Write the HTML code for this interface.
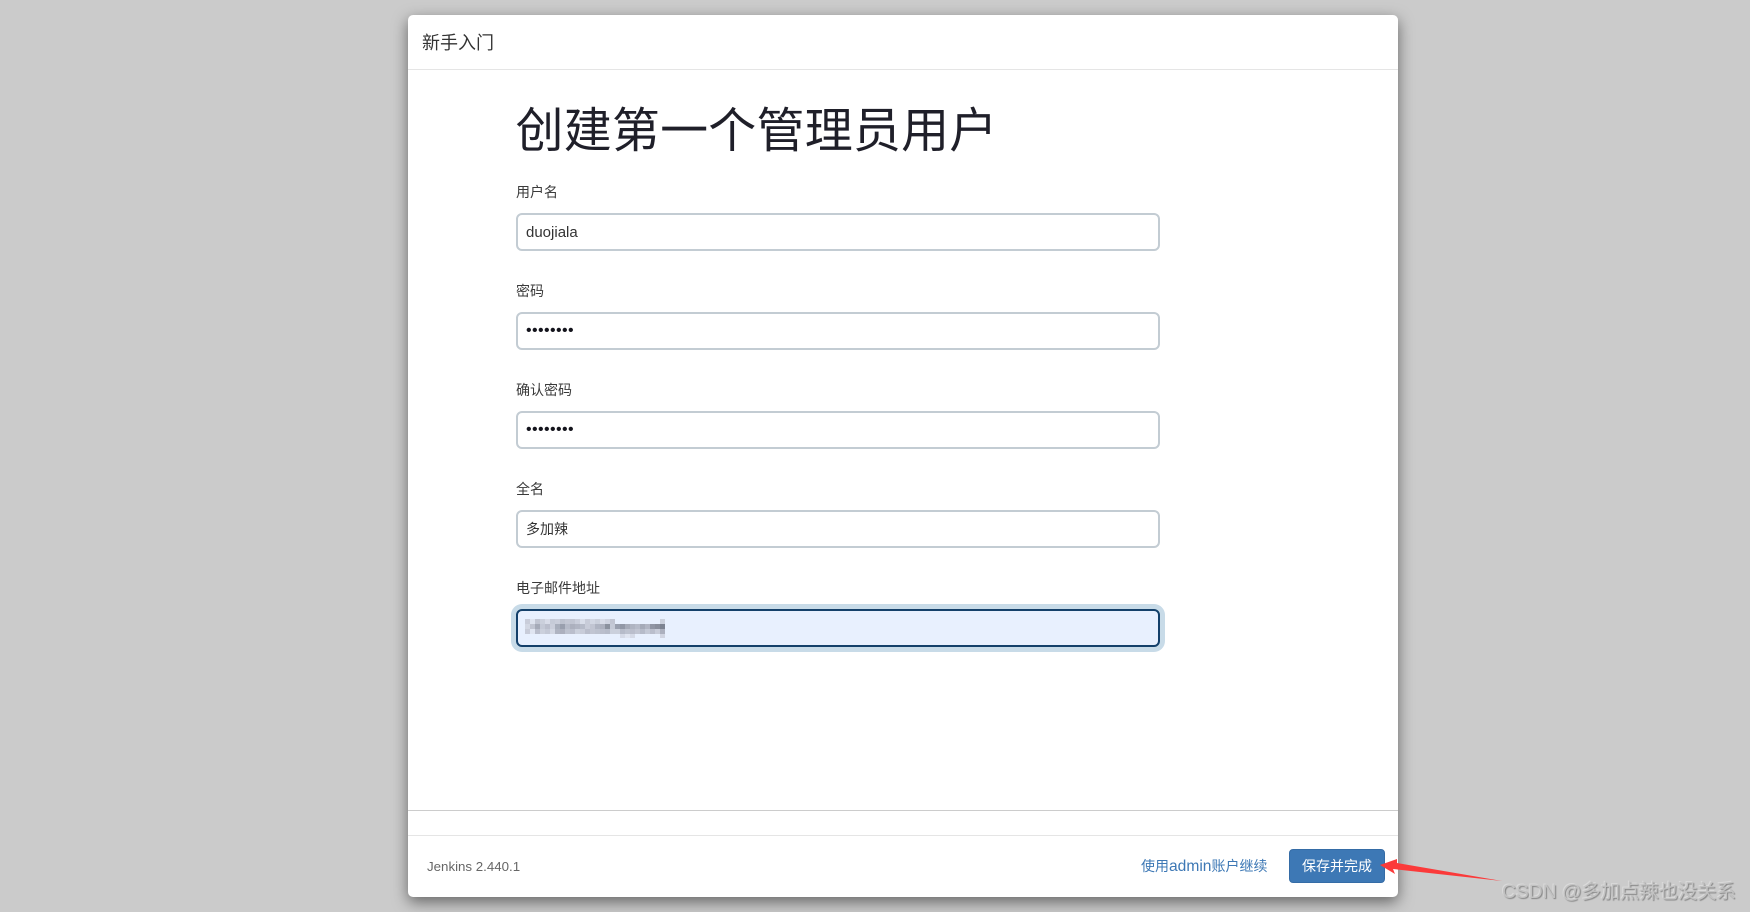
<!DOCTYPE html>
<html lang="zh"><head><meta charset="utf-8"><title>新手入门</title>
<style>
*{box-sizing:border-box}
html,body{margin:0;padding:0;width:1750px;height:912px;overflow:hidden;background:#cbcbcb;font-family:"Liberation Sans","Noto Sans CJK SC",sans-serif;}
.panel{position:absolute;left:408px;top:15px;width:990px;height:882px;background:#fff;border-radius:5px;box-shadow:0 5px 15px rgba(0,0,0,.5)}
.abs{position:absolute;white-space:nowrap}
.line{position:absolute;left:408px;width:990px;height:1px}
h1{position:absolute;margin:0;left:515.5px;top:97px;font-size:48px;line-height:70px;font-weight:400;letter-spacing:.2px;color:#1f1f29;white-space:nowrap}
.lab{position:absolute;left:516px;font-size:14px;line-height:20px;color:#3a3a3a;white-space:nowrap}
.inp{position:absolute;left:516px;width:644px;height:38px;border:2px solid #c3ccd3;border-radius:6px;background:#fff;font-size:15px;line-height:36px;padding-left:8px;color:#333;white-space:nowrap}
.cj{font-size:14px;line-height:34px}
.dots{font-size:16px;line-height:34px;letter-spacing:.4px;color:#14141c}
.email{left:516px;top:609px;border:2px solid #14406a;background:#e8f0fe;box-shadow:0 0 0 5px #c8dbe8}
.btn{position:absolute;left:1289px;top:849px;width:96px;height:34px;background:#3d78b5;border:1px solid #356ca6;border-radius:4px;color:#fff;font-size:14px;line-height:32px;text-align:center}
</style></head><body>
<div class="panel"></div>
<div class="abs" style="left:422px;top:31px;font-size:18px;line-height:24px;color:#333">新手入门</div>
<div class="line" style="top:69px;background:#e5e5e5"></div>
<h1>创建第一个管理员用户</h1>
<div class="lab" style="top:182px">用户名</div>
<div class="inp" style="top:213px">duojiala</div>
<div class="lab" style="top:281px">密码</div>
<div class="inp dots" style="top:312px">••••••••</div>
<div class="lab" style="top:380px">确认密码</div>
<div class="inp dots" style="top:411px">••••••••</div>
<div class="lab" style="top:479px">全名</div>
<div class="inp cj" style="top:510px">多加辣</div>
<div class="lab" style="top:578px">电子邮件地址</div>
<div class="inp email"></div>
<svg class="abs" style="left:525px;top:619px;opacity:.88" width="140" height="19" viewBox="0 0 28 3.8" preserveAspectRatio="none">
<g shape-rendering="crispEdges">
<rect x="0" y="0" width="1" height="1" fill="#c5c9d6"/><rect x="1" y="0" width="1" height="1" fill="#dde2ee"/><rect x="2" y="0" width="1" height="1" fill="#bcc0cd"/><rect x="3" y="0" width="1" height="1" fill="#c8ccd8"/><rect x="4" y="0" width="1" height="1" fill="#d6dae6"/><rect x="5" y="0" width="1" height="1" fill="#c2c6d3"/><rect x="6" y="0" width="1" height="1" fill="#c6cad7"/><rect x="7" y="0" width="1" height="1" fill="#b8bcc9"/><rect x="8" y="0" width="1" height="1" fill="#bec2cf"/><rect x="9" y="0" width="1" height="1" fill="#bcc0cd"/><rect x="10" y="0" width="1" height="1" fill="#c6cad7"/><rect x="11" y="0" width="1" height="1" fill="#d8dce8"/><rect x="12" y="0" width="1" height="1" fill="#c4c8d5"/><rect x="13" y="0" width="1" height="1" fill="#d0d4e0"/><rect x="14" y="0" width="1" height="1" fill="#c8ccd8"/><rect x="15" y="0" width="1" height="1" fill="#d6dae6"/><rect x="16" y="0" width="1" height="1" fill="#ccd0dc"/><rect x="17" y="0" width="1" height="1" fill="#bcc0cd"/><rect x="27" y="0" width="1" height="1" fill="#c8ccd8"/>
<rect x="0" y="1" width="1" height="1" fill="#d0d4e0"/><rect x="1" y="1" width="1" height="1" fill="#bcc0cd"/><rect x="2" y="1" width="1" height="1" fill="#9ca1af"/><rect x="3" y="1" width="1" height="1" fill="#c0c4d1"/><rect x="4" y="1" width="1" height="1" fill="#b4b8c6"/><rect x="5" y="1" width="1" height="1" fill="#c6cad7"/><rect x="6" y="1" width="1" height="1" fill="#a0a5b3"/><rect x="7" y="1" width="1" height="1" fill="#8f94a3"/><rect x="8" y="1" width="1" height="1" fill="#b0b4c2"/><rect x="9" y="1" width="1" height="1" fill="#a4a8b6"/><rect x="10" y="1" width="1" height="1" fill="#aaaebc"/><rect x="11" y="1" width="1" height="1" fill="#b0b4c2"/><rect x="12" y="1" width="1" height="1" fill="#c4c8d5"/><rect x="13" y="1" width="1" height="1" fill="#bcc0cd"/><rect x="14" y="1" width="1" height="1" fill="#a8acba"/><rect x="15" y="1" width="1" height="1" fill="#a4a8b6"/><rect x="16" y="1" width="1" height="1" fill="#7f8491"/><rect x="17" y="1" width="1" height="1" fill="#c0c4d1"/><rect x="18" y="1" width="1" height="1" fill="#8f94a3"/><rect x="19" y="1" width="1" height="1" fill="#868b9a"/><rect x="20" y="1" width="1" height="1" fill="#9ca1af"/><rect x="21" y="1" width="1" height="1" fill="#a8acba"/><rect x="22" y="1" width="1" height="1" fill="#b0b4c2"/><rect x="23" y="1" width="1" height="1" fill="#9ca1af"/><rect x="24" y="1" width="1" height="1" fill="#aaaebc"/><rect x="25" y="1" width="1" height="1" fill="#848998"/><rect x="26" y="1" width="1" height="1" fill="#7d818f"/><rect x="27" y="1" width="1" height="1" fill="#6f7482"/>
<rect x="0" y="2" width="1" height="1" fill="#c4c8d5"/><rect x="1" y="2" width="1" height="1" fill="#e0e4f0"/><rect x="2" y="2" width="1" height="1" fill="#b4b8c6"/><rect x="3" y="2" width="1" height="1" fill="#c8ccd8"/><rect x="4" y="2" width="1" height="1" fill="#c0c4d1"/><rect x="5" y="2" width="1" height="1" fill="#d0d4e0"/><rect x="6" y="2" width="1" height="1" fill="#a8acba"/><rect x="7" y="2" width="1" height="1" fill="#a4a8b6"/><rect x="8" y="2" width="1" height="1" fill="#b8bcc9"/><rect x="9" y="2" width="1" height="1" fill="#b4b8c6"/><rect x="10" y="2" width="1" height="1" fill="#c8ccd8"/><rect x="11" y="2" width="1" height="1" fill="#c4c8d5"/><rect x="12" y="2" width="1" height="1" fill="#b4b8c6"/><rect x="13" y="2" width="1" height="1" fill="#bcc0cd"/><rect x="14" y="2" width="1" height="1" fill="#b8bcc9"/><rect x="15" y="2" width="1" height="1" fill="#b4b8c6"/><rect x="16" y="2" width="1" height="1" fill="#b0b4c2"/><rect x="17" y="2" width="1" height="1" fill="#c8ccd8"/><rect x="18" y="2" width="1" height="1" fill="#c8ccd8"/><rect x="19" y="2" width="1" height="1" fill="#b0b4c2"/><rect x="20" y="2" width="1" height="1" fill="#b8bcc9"/><rect x="21" y="2" width="1" height="1" fill="#b4b8c6"/><rect x="22" y="2" width="1" height="1" fill="#bcc0cd"/><rect x="23" y="2" width="1" height="1" fill="#b0b4c2"/><rect x="24" y="2" width="1" height="1" fill="#c0c4d1"/><rect x="25" y="2" width="1" height="1" fill="#b4b8c6"/><rect x="26" y="2" width="1" height="1" fill="#c4c8d5"/><rect x="27" y="2" width="1" height="1" fill="#a4a8b6"/>
<rect x="19" y="3" width="1" height=".8" fill="#d3d7e4"/><rect x="20" y="3" width="1" height=".8" fill="#e0e4f0"/><rect x="21" y="3" width="1" height=".8" fill="#d3d7e4"/><rect x="27" y="3" width="1" height=".8" fill="#cdd1de"/>
</g></svg>
<div class="line" style="top:810px;background:#ccc"></div>
<div class="line" style="top:835px;background:#e5e5e5"></div>
<div class="abs" style="left:427px;top:857px;font-size:13.3px;line-height:20px;color:#666">Jenkins 2.440.1</div>
<div class="abs" style="left:1141px;top:856px;font-size:14px;line-height:20px;color:#3d78b5">使用<span style="font-size:15.6px">admin</span>账户继续</div>
<div class="btn">保存并完成</div>
<svg class="abs" style="left:1370px;top:850px" width="140" height="40" viewBox="0 0 140 40"><polygon points="10,15 27,9 27,13 132,31 23,19 25,24" fill="#fb3a3a"/></svg>
<div class="abs" style="left:1502px;top:879px;font-size:19.3px;line-height:28px;color:#c2c2c2;text-shadow:1px 1px 1px #858585,-1px -1px 0 #dadada">CSDN @多加点辣也没关系</div>
</body></html>
